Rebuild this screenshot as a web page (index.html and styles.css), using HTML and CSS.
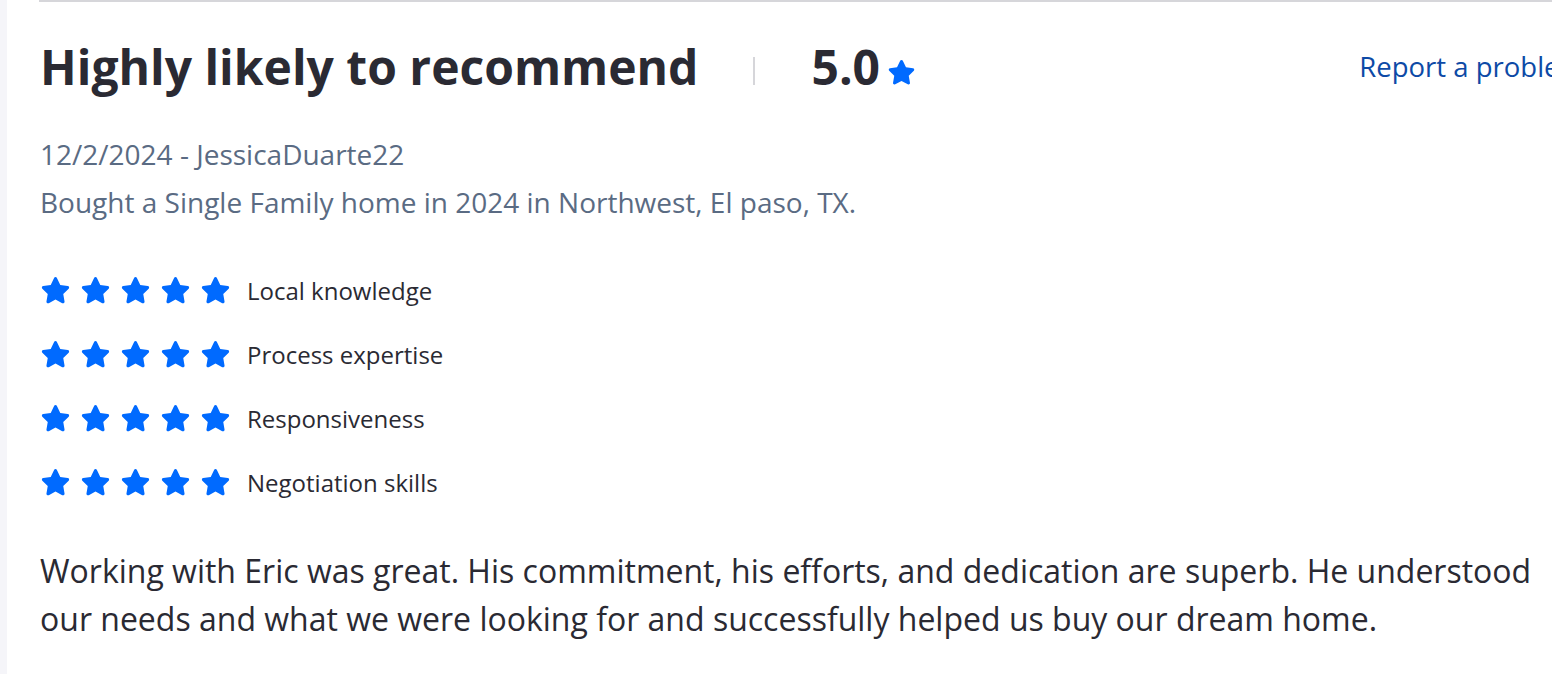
FILE: index.html
```html
<!DOCTYPE html>
<html lang="en">
<head>
<meta charset="utf-8">
<title>Review</title>
<link rel="stylesheet" href="styles.css">
</head>
<body>
<div class="page">
  <div class="side-strip"></div>
  <main class="main">
    <article class="review">
      <header class="review-head">
        <div class="head-left">
          <h2 class="review-title">Highly likely to recommend</h2>
          <span class="divider"></span>
          <span class="score">5.0</span>
          <svg class="score-star" viewBox="0 0 24 24" aria-hidden="true"><use href="#s"/></svg>
        </div>
        <a class="report" href="#">Report a problem</a>
      </header>

      <div class="meta">
        <div class="meta-line">12/2/2024 - JessicaDuarte22</div>
        <div class="meta-line">Bought a Single Family home in 2024 in Northwest, El paso, TX.</div>
      </div>

      <ul class="ratings">
        <li class="rating">
          <span class="stars">
            <svg class="star" viewBox="0 0 24 24"><use href="#s"/></svg>
            <svg class="star" viewBox="0 0 24 24"><use href="#s"/></svg>
            <svg class="star" viewBox="0 0 24 24"><use href="#s"/></svg>
            <svg class="star" viewBox="0 0 24 24"><use href="#s"/></svg>
            <svg class="star" viewBox="0 0 24 24"><use href="#s"/></svg>
          </span>
          <span class="rating-label">Local knowledge</span>
        </li>
        <li class="rating">
          <span class="stars">
            <svg class="star" viewBox="0 0 24 24"><use href="#s"/></svg>
            <svg class="star" viewBox="0 0 24 24"><use href="#s"/></svg>
            <svg class="star" viewBox="0 0 24 24"><use href="#s"/></svg>
            <svg class="star" viewBox="0 0 24 24"><use href="#s"/></svg>
            <svg class="star" viewBox="0 0 24 24"><use href="#s"/></svg>
          </span>
          <span class="rating-label">Process expertise</span>
        </li>
        <li class="rating">
          <span class="stars">
            <svg class="star" viewBox="0 0 24 24"><use href="#s"/></svg>
            <svg class="star" viewBox="0 0 24 24"><use href="#s"/></svg>
            <svg class="star" viewBox="0 0 24 24"><use href="#s"/></svg>
            <svg class="star" viewBox="0 0 24 24"><use href="#s"/></svg>
            <svg class="star" viewBox="0 0 24 24"><use href="#s"/></svg>
          </span>
          <span class="rating-label">Responsiveness</span>
        </li>
        <li class="rating">
          <span class="stars">
            <svg class="star" viewBox="0 0 24 24"><use href="#s"/></svg>
            <svg class="star" viewBox="0 0 24 24"><use href="#s"/></svg>
            <svg class="star" viewBox="0 0 24 24"><use href="#s"/></svg>
            <svg class="star" viewBox="0 0 24 24"><use href="#s"/></svg>
            <svg class="star" viewBox="0 0 24 24"><use href="#s"/></svg>
          </span>
          <span class="rating-label">Negotiation skills</span>
        </li>
      </ul>

      <p class="review-body">Working with Eric was great. His commitment, his efforts, and dedication are superb. He understood our needs and what we were looking for and successfully helped us buy our dream home.</p>
    </article>
  </main>
</div>
<svg class="defs" width="0" height="0" aria-hidden="true">
  <defs>
    <path id="s" d="M12 1.6c.5 0 .9.3 1.1.7l2.6 5.4 5.8.8c1 .1 1.4 1.4.7 2.1l-4.2 4.1 1 5.8c.2 1-.9 1.8-1.8 1.3L12 19l-5.2 2.8c-.9.5-2-.3-1.8-1.3l1-5.8-4.2-4.1c-.7-.7-.3-2 .7-2.1l5.8-.8 2.6-5.4c.2-.4.6-.7 1.1-.7z"/>
  </defs>
</svg>
</body>
</html>
```

FILE: styles.css
```css
html, body {
  margin: 0;
  padding: 0;
  background: #ffffff;
  overflow: hidden;
}

body {
  font-family: "Open Sans", "Noto Sans", sans-serif;
  color: #2a2a33;
}

.page {
  display: flex;
  min-height: 674px;
  width: 1640px;
}

.side-strip {
  width: 7px;
  background: #f5f5f9;
  flex: none;
}

.main {
  padding-left: 32px;
  flex: none;
}

.review {
  width: 1545px;
  border-top: 2px solid #d6d6da;
  padding-left: 1px;
}

.review-head {
  display: flex;
  justify-content: space-between;
  align-items: flex-start;
  margin-top: 34px;
}

.head-left {
  display: flex;
  align-items: center;
}

.review-title {
  margin: 0;
  font-size: 48px;
  font-weight: 700;
  line-height: 62px;
  color: #2a2a33;
}

.divider {
  width: 2px;
  height: 28px;
  background: #d6d6da;
  margin: 8px 56px 0 55px;
}

.score {
  font-size: 48px;
  font-weight: 700;
  line-height: 62px;
  color: #2a2a33;
}

.score-star {
  width: 29px;
  height: 29px;
  fill: #006aff;
  margin: 10px 0 0 7px;
}

.report {
  font-size: 27.5px;
  line-height: 36px;
  margin-top: 13px;
  color: #0d4aa6;
  text-decoration: none;
}

.meta {
  margin-top: 32px;
  color: #5a6b83;
  font-size: 28px;
  line-height: 48px;
}

.ratings {
  list-style: none;
  margin: 32px 0 0;
  padding: 0;
}

.rating {
  display: flex;
  align-items: center;
  height: 64px;
}

.stars {
  display: flex;
  gap: 9px;
  margin-right: 16px;
}

.star {
  width: 31px;
  height: 31px;
  fill: #006aff;
}

.rating-label {
  font-size: 24px;
  color: #2a2a33;
}

.review-body {
  margin: 33px 0 0;
  font-size: 32px;
  line-height: 48px;
  color: #2a2a33;
  max-width: 1535px;
}

.defs {
  position: absolute;
  width: 0;
  height: 0;
}
```
